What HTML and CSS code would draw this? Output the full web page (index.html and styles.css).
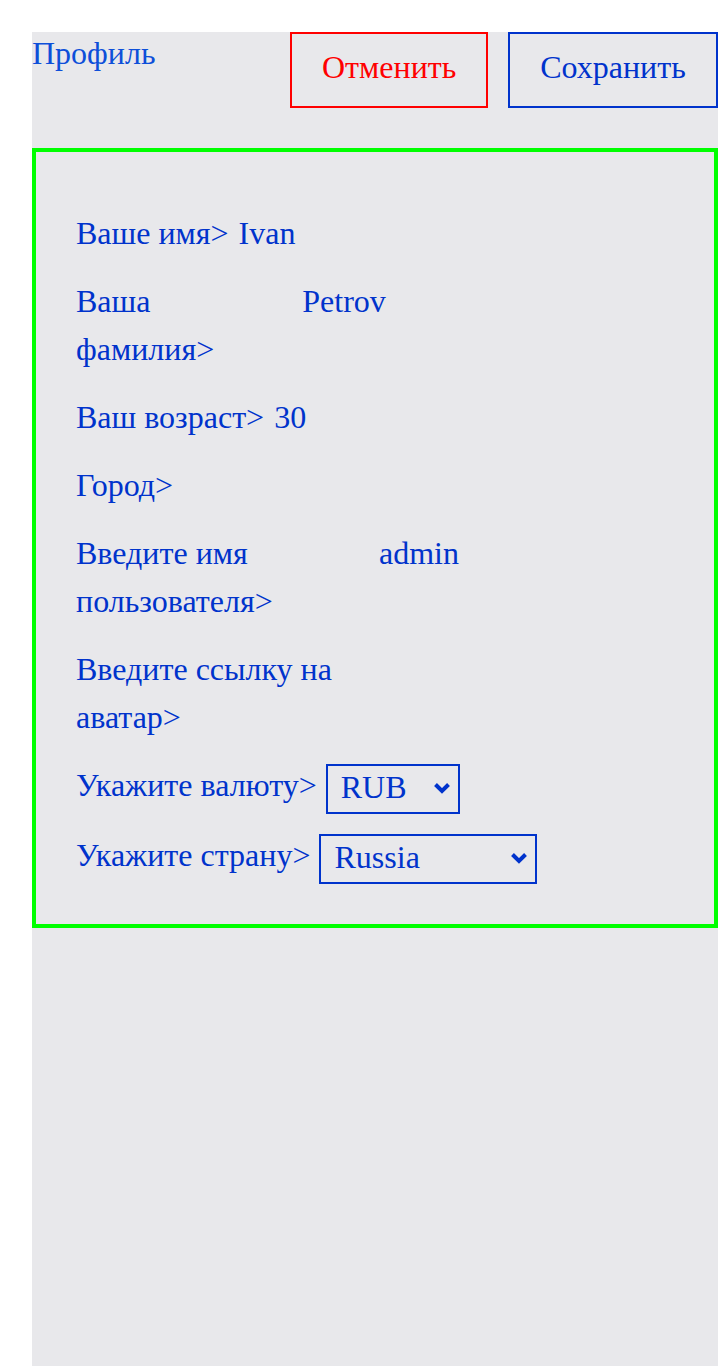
FILE: index.html
```html
<!DOCTYPE html>
<html lang="ru">
<head>
<meta charset="utf-8">
<title>Профиль</title>
<link rel="stylesheet" href="styles.css">
</head>
<body>
<div class="page">
  <header class="header">
    <h1 class="title">Профиль</h1>
    <div class="actions">
      <button class="btn btn-cancel" type="button">Отменить</button>
      <button class="btn btn-save" type="button">Сохранить</button>
    </div>
  </header>
  <section class="card">
    <div class="row">
      <span class="label">Ваше имя&gt;</span>
      <span class="value">Ivan</span>
    </div>
    <div class="row">
      <span class="label">Ваша фамилия&gt;</span>
      <span class="value">Petrov</span>
    </div>
    <div class="row">
      <span class="label">Ваш возраст&gt;</span>
      <span class="value">30</span>
    </div>
    <div class="row">
      <span class="label">Город&gt;</span>
      <span class="value"></span>
    </div>
    <div class="row">
      <span class="label">Введите имя пользователя&gt;</span>
      <span class="value">admin</span>
    </div>
    <div class="row row-avatar">
      <span class="label">Введите ссылку на аватар&gt;</span>
      <span class="value"></span>
    </div>
    <div class="row row-select">
      <span class="label">Укажите валюту&gt;</span>
      <span class="select-wrap">
        <select class="select select-currency">
          <option>RUB</option>
          <option>USD</option>
          <option>EUR</option>
        </select>
        <svg class="chevron" width="18" height="12" viewBox="0 0 18 12" aria-hidden="true"><path d="M2.5 2.5 9 9 15.5 2.5" fill="none" stroke="#0033cc" stroke-width="4"/></svg>
      </span>
    </div>
    <div class="row row-select">
      <span class="label">Укажите страну&gt;</span>
      <span class="select-wrap">
        <select class="select select-country">
          <option>Russia</option>
          <option>Kazakhstan</option>
          <option>Belarus</option>
        </select>
        <svg class="chevron" width="18" height="12" viewBox="0 0 18 12" aria-hidden="true"><path d="M2.5 2.5 9 9 15.5 2.5" fill="none" stroke="#0033cc" stroke-width="4"/></svg>
      </span>
    </div>
  </section>
</div>
</body>
</html>
```
FILE: styles.css
```css
html, body {
  margin: 0;
  padding: 0;
  background: #ffffff;
}
body {
  font-family: "Liberation Serif", "Times New Roman", serif;
  font-size: 32px;
  color: #0033cc;
  padding: 32px 0 0 32px;
}
.page {
  background: #e8e8eb;
  min-height: 1334px;
  display: flex;
  flex-direction: column;
  gap: 40px;
}
.header {
  display: flex;
  justify-content: space-between;
  align-items: flex-start;
}
.title {
  margin: 0;
  font-size: 32px;
  font-weight: normal;
  line-height: 42px;
  color: #0d4fd9;
}
.actions {
  display: flex;
  gap: 20px;
}
.btn {
  font-family: inherit;
  font-size: 32px;
  background: transparent;
  height: 76px;
  padding: 0 30px 5px;
  border-width: 2px;
  border-style: solid;
  cursor: pointer;
}
.btn-cancel {
  color: #ff0000;
  border-color: #ff0000;
  width: 198px;
}
.btn-save {
  color: #0033cc;
  border-color: #0033cc;
  width: 210px;
}
.card {
  border: 4px solid #00ff00;
  padding: 57px 40px 40px;
  display: flex;
  flex-direction: column;
  gap: 20px;
}
.row {
  display: flex;
  gap: 10px;
  line-height: 48px;
}
.label {
  flex: 0 1 auto;
}
.value {
  flex: 0 1 379px;
}
.row-avatar {
  margin-bottom: 3px;
}
.row-select {
  align-items: flex-start;
}
.row-select .label {
  margin-top: -3px;
}
.select-wrap {
  position: relative;
  display: flex;
  margin-left: -1px;
}
.select {
  appearance: none;
  -webkit-appearance: none;
  font-family: inherit;
  font-size: 32px;
  line-height: 43px;
  color: #0033cc;
  background: transparent;
  border: 2px solid #0033cc;
  border-radius: 0;
  height: 50px;
  padding: 0 30px 3px 13px;
  margin: 0;
}
.select-currency {
  width: 134px;
}
.select-country {
  width: 218px;
}
.chevron {
  position: absolute;
  right: 9px;
  top: 18px;
  pointer-events: none;
}
```
